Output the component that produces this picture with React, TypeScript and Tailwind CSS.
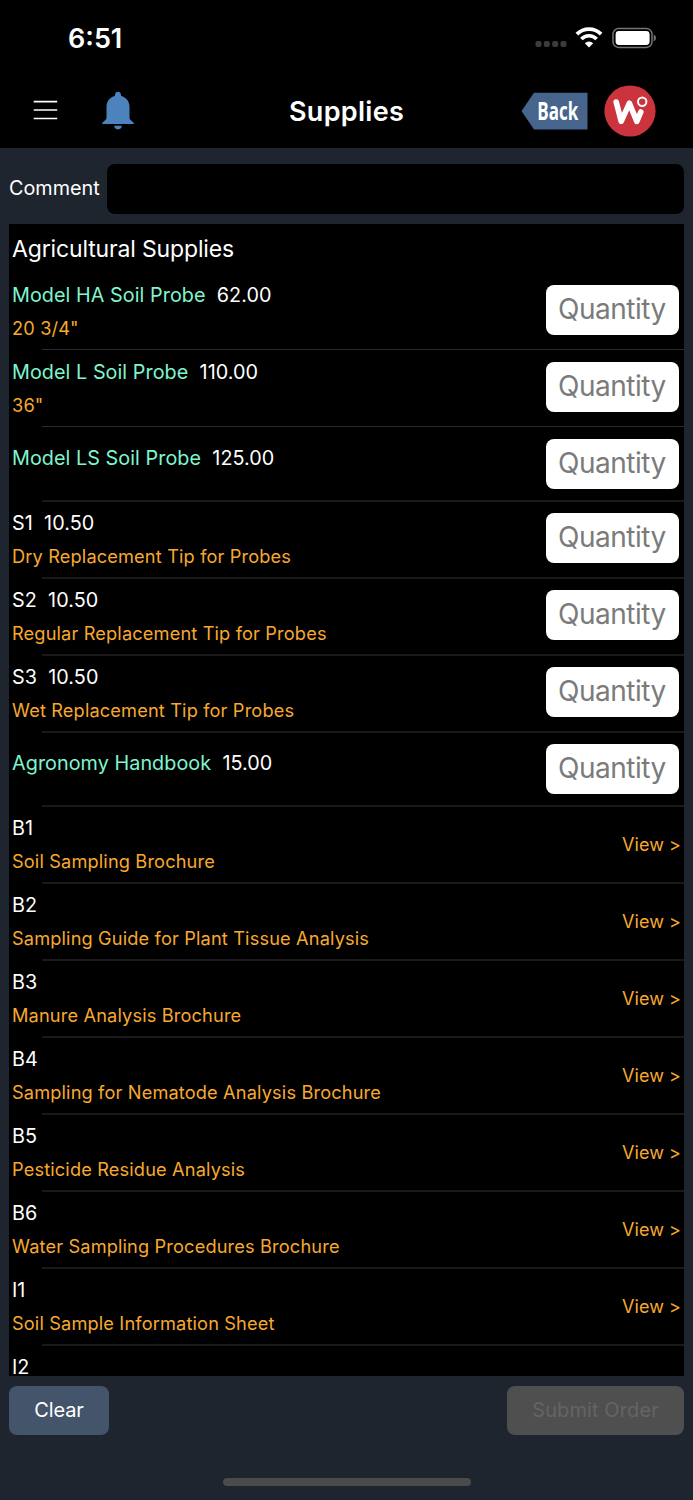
import React, { useState } from 'react';

interface SupplyItem {
  name: string;
  price?: string;
  sub?: string;
  link?: boolean;
  brochure?: boolean;
}

const ITEMS: SupplyItem[] = [
  { name: 'Model HA Soil Probe', price: '62.00', sub: '20 3/4"', link: true },
  { name: 'Model L Soil Probe', price: '110.00', sub: '36"', link: true },
  { name: 'Model LS Soil Probe', price: '125.00', link: true },
  { name: 'S1', price: '10.50', sub: 'Dry Replacement Tip for Probes' },
  { name: 'S2', price: '10.50', sub: 'Regular Replacement Tip for Probes' },
  { name: 'S3', price: '10.50', sub: 'Wet Replacement Tip for Probes' },
  { name: 'Agronomy Handbook', price: '15.00', link: true },
  { name: 'B1', sub: 'Soil Sampling Brochure', brochure: true },
  { name: 'B2', sub: 'Sampling Guide for Plant Tissue Analysis', brochure: true },
  { name: 'B3', sub: 'Manure Analysis Brochure', brochure: true },
  { name: 'B4', sub: 'Sampling for Nematode Analysis Brochure', brochure: true },
  { name: 'B5', sub: 'Pesticide Residue Analysis', brochure: true },
  { name: 'B6', sub: 'Water Sampling Procedures Brochure', brochure: true },
  { name: 'I1', sub: 'Soil Sample Information Sheet', brochure: true },
  { name: 'I2', brochure: true },
];

const StatusBar: React.FC = () => (
  <div className="flex h-[74px] items-center justify-between pr-[36px] pl-[68px] text-white">
    <span className="mt-[3px] text-[27px] leading-none font-semibold">6:51</span>
    <div className="mt-px flex items-center">
      <svg width="32" height="8" viewBox="0 0 32 8" className="mt-[13px]" fill="#3c3c3c">
        <rect x="0.5" y="1" width="6" height="6" rx="2" />
        <rect x="8.8" y="1" width="6" height="6" rx="2" />
        <rect x="17.2" y="1" width="6" height="6" rx="2" />
        <rect x="25.5" y="1" width="6" height="6" rx="2" />
      </svg>
      <svg width="28" height="21" viewBox="0 0 28 21" className="ml-[8px]" fill="none" stroke="#fff">
        <path d="M1.9 7.2A17 17 0 0 1 26.1 7.2" strokeWidth="3.8" />
        <path d="M6.4 12A10.5 10.5 0 0 1 21.6 12" strokeWidth="3.6" />
        <path d="M14 20.4L9.8 16.2A6 6 0 0 1 18.2 16.2Z" fill="#fff" stroke="none" />
      </svg>
      <svg width="45" height="22" viewBox="0 0 45 22" className="ml-[9px]">
        <rect x="1" y="1.6" width="39" height="18.8" rx="5.5" fill="none" stroke="#747474" strokeWidth="1.5" />
        <rect x="3.6" y="4" width="34" height="14" rx="3.4" fill="#fff" />
        <path d="M41.7 7.6Q44 8.6 44 11T41.7 14.4Z" fill="#747474" />
      </svg>
    </div>
  </div>
);

const NavBar: React.FC = () => (
  <div className="grid h-[73px] grid-cols-[1fr_auto_1fr] items-center pr-[37px] pl-[33px] text-white">
    <div className="flex items-center gap-[43px]">
      <svg width="25" height="22" viewBox="0 0 25 22" className="-mt-[2px]" stroke="#fff" strokeWidth="1.7">
        <path d="M0.7 2.7H24.2M0.7 11H24.2M0.7 19.5H24.2" />
      </svg>
      <svg width="34" height="39" viewBox="0 0 34 39" fill="#4d83bd">
        <path d="M17 0.8C15.3 0.8 14.2 2 14.1 3.6L13.8 5.1C9 6.3 5.5 10.5 5.5 15.8V26.4C5.5 27.6 5.1 28.2 4.4 28.9L1.6 31.4C0.9 32.1 1 33 2 33H32C33 33 33.1 32.1 32.4 31.4L29.6 28.9C28.9 28.2 28.5 27.6 28.5 26.4V15.8C28.5 10.5 25 6.3 20.2 5.1L19.9 3.6C19.8 2 18.7 0.8 17 0.8Z" />
        <path d="M13.1 34.8H20.9C20.7 37 19.2 38.4 17 38.4S13.3 37 13.1 34.8Z" />
      </svg>
    </div>
    <h1 className="pt-px pl-[4px] text-[27px] leading-none font-semibold tracking-[0.3px]">Supplies</h1>
    <div className="flex items-center justify-end gap-[16px]">
      <button className="relative flex h-[38px] w-[67px] items-center justify-end pr-[10px]">
        <svg width="67" height="38" viewBox="0 0 67 38" className="absolute inset-0" fill="#47658c">
          <path d="M0.5 19L13 0.8H66.5V37.4H13Z" />
        </svg>
        <span className="relative inline-block origin-right scale-x-[0.68] font-['Open_Sans'] text-[25px] leading-none font-bold">Back</span>
      </button>
      <svg width="52" height="52" viewBox="0 0 52 52" fill="none" stroke="#fff">
        <circle cx="26" cy="26" r="25.6" fill="#cb343c" stroke="none" />
        <path d="M12.2 17L17.2 36.4L25.4 18.2L32.8 36.4L36.8 27" strokeWidth="5.6" strokeLinecap="round" strokeLinejoin="round" />
        <circle cx="38.2" cy="16.7" r="4.2" strokeWidth="2" />
      </svg>
    </div>
  </div>
);

const SupplyRow: React.FC<{ item: SupplyItem; index: number }> = ({ item, index }) => {
  const [qty, setQty] = useState('');
  const twoLines = item.sub || item.brochure;

  return (
    <div className={`relative flex shrink-0 items-start justify-between pr-[5px] pl-[3px] ${twoLines ? 'h-[77px]' : 'h-[74px]'}`}>
      {index > 0 && (
        <div className={`absolute top-0 right-0 left-[33px] ${index < 3 ? 'h-px bg-[#2b2b2b]' : 'h-[2px] bg-[#191919]'}`} />
      )}
      <div className={`flex flex-col whitespace-pre ${twoLines ? 'mt-[6px]' : 'mt-[15px]'}`}>
        <div className="text-[19.8px] leading-[34px] tracking-[0.05px]">
          <span className={item.link ? 'text-[#7ff5cf]' : 'text-white'}>{item.name}</span>
          {item.price && <span className="text-white">{'  ' + item.price}</span>}
        </div>
        {item.sub && <div className="text-[18.2px] leading-[32px] tracking-[0.15px] text-[#f7a92f]">{item.sub}</div>}
      </div>
      {item.brochure ? (
        <button className="mt-[31px] mr-[-2px] text-[18px] leading-[18px] tracking-[0.05px] text-[#f7a92f]">View &gt;</button>
      ) : (
        <input
          value={qty}
          onChange={(e) => setQty(e.target.value)}
          placeholder="Quantity"
          className="mt-[13px] h-[50px] w-[133px] rounded-[8px] bg-white pr-[10px] pb-[2px] pl-[12px] text-[28px] tracking-[-0.5px] text-black placeholder:text-[#7b7b7b]"
        />
      )}
    </div>
  );
};

export default function App() {
  const [comment, setComment] = useState('');

  return (
    <div className="flex h-[1500px] w-[693px] flex-col overflow-hidden bg-[#1f252f] font-['Inter',sans-serif]">
      <header className="h-[148px] shrink-0 bg-black">
        <StatusBar />
        <NavBar />
      </header>

      <div className="mt-4 flex h-[50px] shrink-0 items-center px-[9px]">
        <label className="w-[98px] text-[19.8px] leading-none text-white">Comment</label>
        <input
          value={comment}
          onChange={(e) => setComment(e.target.value)}
          className="h-[50px] min-w-0 flex-1 rounded-[8px] bg-black px-3 text-white"
        />
      </div>

      <main className="mx-[9px] mt-[10px] flex h-[1152px] shrink-0 flex-col overflow-hidden bg-black">
        <h2 className="h-[48px] shrink-0 pl-[3px] text-[23px] leading-[50px] tracking-[-0.15px] text-white">Agricultural Supplies</h2>
        {ITEMS.map((item, i) => (
          <SupplyRow key={item.name} item={item} index={i} />
        ))}
      </main>

      <footer className="mt-[10px] flex shrink-0 justify-between px-[9px]">
        <button className="h-[49px] w-[100px] rounded-[8px] bg-[#44546a] pb-px text-[20px] tracking-[-0.15px] text-white">Clear</button>
        <button className="h-[49px] w-[177px] rounded-[8px] bg-[#4f4f4f] pb-px text-[20px] tracking-[0.1px] text-[#646464]" disabled>
          Submit Order
        </button>
      </footer>

      <div className="mt-[43px] h-[8px] w-[248px] shrink-0 self-center rounded-full bg-[#4b4b4b]" />
    </div>
  );
}
